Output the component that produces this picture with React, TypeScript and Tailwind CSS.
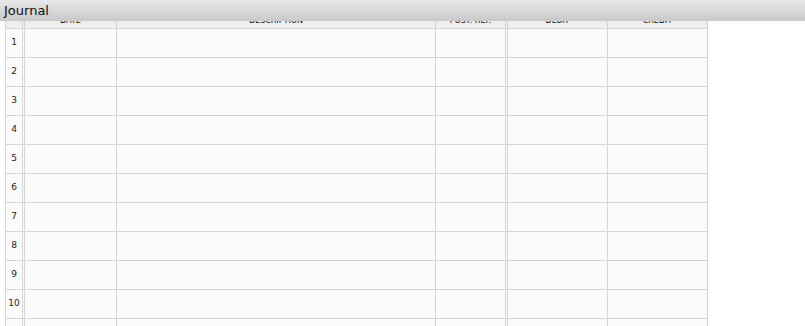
const columns = [
  { key: "date", label: "DATE", width: "w-[92px]" },
  { key: "desc", label: "DESCRIPTION", width: "w-[319px]" },
  { key: "post", label: "POST. REF.", width: "w-[70px]" },
];

const money = [
  { key: "debit", label: "DEBIT", width: "w-[100px]" },
  { key: "credit", label: "CREDIT", width: "w-[100px]" },
];

const rows = Array.from({ length: 12 }, (_, i) => i + 1);

function HeaderCell({ label, width }: { label: string; width: string }) {
  return (
    <div className={`${width} shrink-0 border-r border-[#d6d6d6] overflow-hidden`}>
      <div className="-mt-[4px] text-center text-[8px] leading-[8px] text-[#111]">{label}</div>
    </div>
  );
}

function Row({ n }: { n: number }) {
  return (
    <div className="flex h-[29px] border-b border-[#d6d6d6]">
      <div className="w-[17px] shrink-0 border-r border-[#d6d6d6] flex items-center justify-center text-[9px] text-[#1a1a1a]">
        {n}
      </div>
      <div className="w-[2px] shrink-0 border-r border-[#d6d6d6]" />
      {columns.map((c) => (
        <div key={c.key} className={`${c.width} shrink-0 border-r border-[#d6d6d6]`} />
      ))}
      <div className="w-[2px] shrink-0 border-r border-[#d6d6d6]" />
      {money.map((c) => (
        <div key={c.key} className={`${c.width} shrink-0 border-r border-[#d6d6d6]`} />
      ))}
    </div>
  );
}

export default function App() {
  return (
    <div className="w-[805px] h-[326px] overflow-hidden bg-white" style={{ fontFamily: '"DejaVu Sans", sans-serif' }}>
      {/* title bar */}
      <div className="h-[21px] bg-gradient-to-b from-[#e8e8e8] to-[#c9c9c9] flex items-center pl-[4px]">
        <span className="text-[13px] text-[#111]">Journal</span>
      </div>

      <div className="ml-[5px] w-[703px] border-l border-[#d6d6d6] bg-[#fbfbfb]">
        {/* header row, mostly hidden under the title bar */}
        <div className="flex h-[8px] border-b border-[#d6d6d6] bg-[#eeeeee]">
          <div className="w-[17px] shrink-0 border-r border-[#d6d6d6]" />
          <div className="w-[2px] shrink-0 border-r border-[#d6d6d6]" />
          {columns.map((c) => (
            <HeaderCell key={c.key} label={c.label} width={c.width} />
          ))}
          <div className="w-[2px] shrink-0 border-r border-[#d6d6d6]" />
          {money.map((c) => (
            <HeaderCell key={c.key} label={c.label} width={c.width} />
          ))}
        </div>
        {rows.map((n) => (
          <Row key={n} n={n} />
        ))}
      </div>
    </div>
  );
}
